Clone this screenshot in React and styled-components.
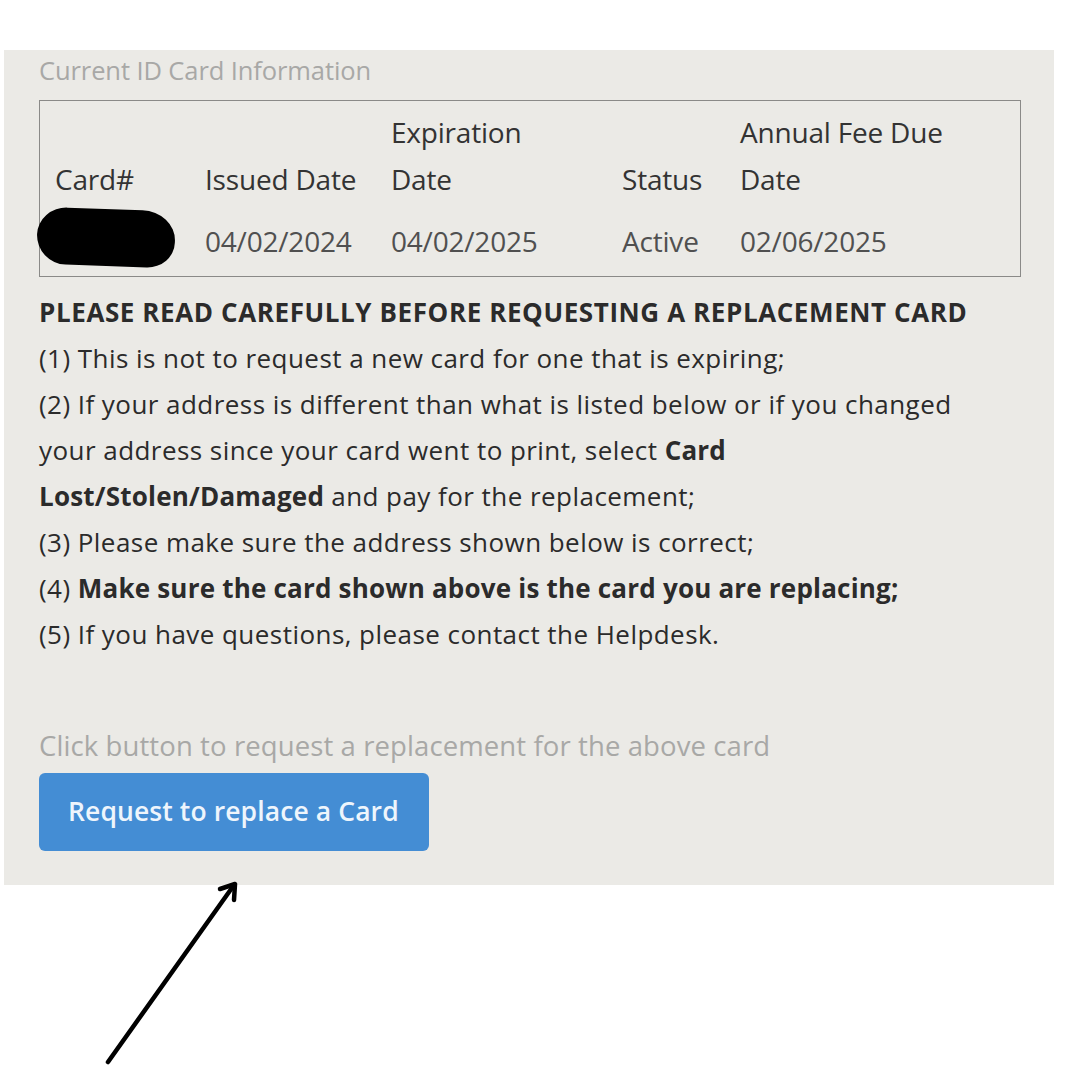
import React from "react";
import styled, { createGlobalStyle } from "styled-components";

const Global = createGlobalStyle`
  html, body {
    margin: 0;
    padding: 0;
    background: #ffffff;
  }
  body {
    font-family: "Open Sans", "Liberation Sans", sans-serif;
  }
`;

const Page = styled.div`
  position: relative;
  width: 1080px;
  height: 1080px;
  padding: 50px 26px 0 4px;
  box-sizing: border-box;
`;

const Panel = styled.div`
  background: #ebeae6;
  height: 835px;
  padding: 5px 33px 0 35px;
  box-sizing: border-box;
`;

const Caption = styled.div`
  color: #a8a8a6;
  font-size: ${(p) => p.size}px;
  line-height: ${(p) => p.lh}px;
  letter-spacing: ${(p) => p.ls}px;
  margin-top: ${(p) => p.top || 0}px;
`;

const CardBox = styled.table`
  width: 100%;
  table-layout: fixed;
  border: 1px solid #8a8a88;
  border-collapse: separate;
  border-spacing: 0;
  margin-top: 15px;
  color: #333;
  font-size: 28px;
  letter-spacing: -0.2px;
`;

const Th = styled.th`
  font-weight: normal;
  text-align: left;
  vertical-align: bottom;
  padding: 8px 0 0 0;
  line-height: 47px;
  width: ${(p) => p.w}px;
  white-space: nowrap;
  &:first-child {
    padding-left: 15px;
  }
`;

const Td = styled.td`
  padding: 14px 0 12px 0;
  height: 46px;
  line-height: 46px;
  color: #505050;
  white-space: nowrap;
  vertical-align: middle;
  &:first-child {
    padding-left: 15px;
  }
`;

const Redacted = styled.span`
  display: inline-block;
  width: 138px;
  height: 57px;
  margin: -8px 0 -8px -18px;
  vertical-align: middle;
  background: #000;
  border-radius: 30px 34px 28px 30px / 28px 30px 26px 30px;
  transform: translateY(-6px) rotate(2deg);
`;

const Notice = styled.div`
  margin-top: 12px;
  color: #2b2b2b;
  font-size: 26px;
  line-height: 46px;
  letter-spacing: 0.45px;
`;

const Line = styled.div`
  white-space: nowrap;
  letter-spacing: ${(p) => (p.heading ? "0.6px" : "inherit")};
  font-weight: ${(p) => (p.heading ? 700 : 400)};
`;

const Strong = styled.b`
  font-weight: 700;
  letter-spacing: 0.2px;
`;

const Button = styled.button`
  display: block;
  margin-top: 4px;
  width: 390px;
  height: 78px;
  border: none;
  border-radius: 6px;
  background: #448dd4;
  color: #eef5fc;
  font-family: "Open Sans", "Liberation Sans", sans-serif;
  font-weight: 600;
  font-size: 26.5px;
  letter-spacing: 0.1px;
  text-align: left;
  padding: 0 0 2px 29px;
`;

const Arrow = styled.svg`
  position: absolute;
  left: 100px;
  top: 875px;
`;

const cols = [
  { key: "card", w: 150, head: "Card#" },
  { key: "issued", w: 186, head: "Issued Date" },
  { key: "exp", w: 231, head: <>Expiration<br />Date</> },
  { key: "status", w: 118, head: "Status" },
  { key: "fee", w: 280, head: <>Annual Fee Due<br />Date</> },
];

const row = ["04/02/2024", "04/02/2025", "Active", "02/06/2025"];

export default function App() {
  return (
    <Page>
      <Global />
      <Panel>
        <Caption size={25.5} lh={30} ls={-0.1}>Current ID Card Information</Caption>
        <CardBox>
          <thead>
            <tr>
              {cols.map((c) => (
                <Th key={c.key} w={c.w}>{c.head}</Th>
              ))}
            </tr>
          </thead>
          <tbody>
            <tr>
              <Td><Redacted /></Td>
              {row.map((v, i) => (
                <Td key={i}>{v}</Td>
              ))}
            </tr>
          </tbody>
        </CardBox>
        <Notice>
          <Line heading>PLEASE READ CAREFULLY BEFORE REQUESTING A REPLACEMENT CARD</Line>
          <Line>(1) This is not to request a new card for one that is expiring;</Line>
          <Line>(2) If your address is different than what is listed below or if you changed</Line>
          <Line>your address since your card went to print, select <Strong>Card</Strong></Line>
          <Line><Strong>Lost/Stolen/Damaged</Strong> and pay for the replacement;</Line>
          <Line>(3) Please make sure the address shown below is correct;</Line>
          <Line>(4) <Strong>Make sure the card shown above is the card you are replacing;</Strong></Line>
          <Line>(5) If you have questions, please contact the Helpdesk.</Line>
        </Notice>
        <Caption size={27.5} lh={46} ls={0.1} top={66}>Click button to request a replacement for the above card</Caption>
        <Button>Request to replace a Card</Button>
      </Panel>
      <Arrow width="150" height="200" viewBox="0 0 150 200">
        <line x1="8" y1="187" x2="134" y2="10" stroke="#000" strokeWidth="4.5" strokeLinecap="round" />
        <polyline points="120,14 135,9 134,25" fill="none" stroke="#000" strokeWidth="4.5" strokeLinecap="round" strokeLinejoin="round" />
      </Arrow>
    </Page>
  );
}
